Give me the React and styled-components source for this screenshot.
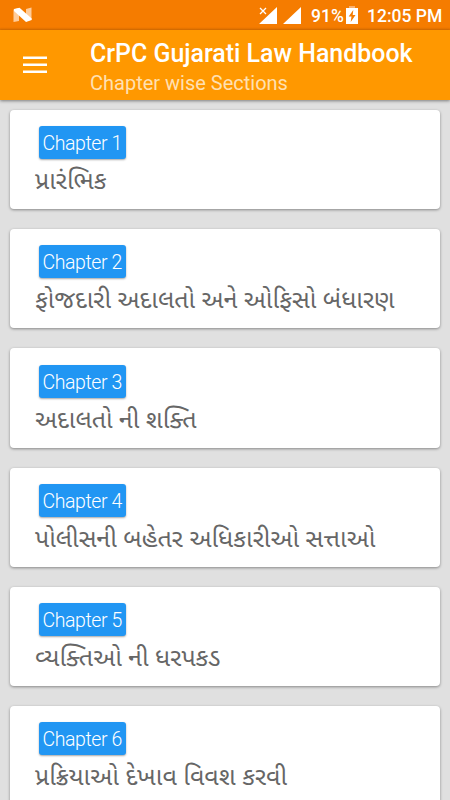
import React from "react";
import styled, { createGlobalStyle } from "styled-components";

const GlobalStyle = createGlobalStyle`
  *, *::before, *::after { box-sizing: border-box; }
  body {
    margin: 0;
    background: #e0e0e0;
    font-family: Roboto, "Noto Sans", sans-serif;
  }
`;

const Screen = styled.div`
  display: flex;
  flex-direction: column;
  height: 800px;
  overflow: hidden;
  background: #e0e0e0;
`;

const StatusBar = styled.div`
  display: flex;
  flex: none;
  align-items: center;
  height: 30px;
  padding: 0 8px 0 13px;
  background: linear-gradient(#f57c00 27px, #e27200 30px);
  color: #fff;
`;

const StatusIcons = styled.div`
  display: flex;
  align-items: center;
  margin-left: auto;
`;

const StatusText = styled.span`
  font-size: 17.5px;
  font-weight: 500;
  line-height: 30px;
  width: ${(p) => p.$width}px;
  margin-left: ${(p) => p.$gap}px;
  padding-top: 1px;
  white-space: nowrap;
`;

const AppBar = styled.header`
  display: flex;
  flex: none;
  height: 70px;
  padding-left: 23px;
  background: #ff9800;
  box-shadow: 0 1px 3px rgba(0, 0, 0, 0.45);
  z-index: 1;
`;

const MenuButton = styled.button`
  display: flex;
  align-items: center;
  width: 67px;
  padding: 0;
  border: 0;
  background: none;
`;

const Titles = styled.div`
  display: flex;
  flex-direction: column;
  padding-top: 8px;
  white-space: nowrap;
`;

const Title = styled.h1`
  margin: 0;
  color: #fff;
  font-size: 24.93px;
  font-weight: 500;
  line-height: 31px;
`;

const Subtitle = styled.div`
  color: #ffe0b2;
  font-size: 20px;
  line-height: 29px;
`;

const List = styled.main`
  display: flex;
  flex-direction: column;
  gap: 20px;
  padding: 10px 10px 0;
`;

const Card = styled.article`
  display: flex;
  flex: none;
  flex-direction: column;
  align-items: flex-start;
  height: 99.2px;
  padding: 16.2px 25px 0;
  border-radius: 4px;
  background: #fff;
  box-shadow: 0 1px 3px rgba(0, 0, 0, 0.4);
`;

const Badge = styled.span`
  width: 87px;
  height: 33px;
  margin-left: 4px;
  padding-left: 3.5px;
  border-radius: 3px;
  background: #2196f3;
  box-shadow: 0 1px 2px rgba(0, 0, 0, 0.35);
  color: #fff;
  font-size: 19.5px;
  font-weight: 300;
  letter-spacing: -0.42px;
  line-height: 36px;
  white-space: nowrap;
`;

const Name = styled.div`
  color: #666;
  font-family: "Noto Sans Gujarati", "Noto Sans", sans-serif;
  font-size: 25px;
  line-height: 48.4px;
  white-space: nowrap;
`;

const chapters = [
  "પ્રારંભિક",
  "ફોજદારી અદાલતો અને ઓફિસો બંધારણ",
  "અદાલતો ની શક્તિ",
  "પોલીસની બહેતર અધિકારીઓ સત્તાઓ",
  "વ્યક્તિઓ ની ધરપકડ",
  "પ્રક્રિયાઓ દેખાવ વિવશ કરવી",
];

const NougatIcon = () => (
  <svg width="20" height="16" viewBox="0 0 20 16">
    <path d="M0.5 2.5 6 1v13L0.5 15ZM13 2l5.5-1.5v12L13 14.5Z" fill="#ffcc99" />
    <path d="M1 2 6.5 0.8 18.7 11.5V13L13 15 1 4Z" fill="#fff" />
  </svg>
);

const SignalIcons = () => (
  <svg width="42" height="20" viewBox="0 0 42 20" fill="#fff">
    <path d="M18 2v17H0ZM42 2v17H24Z" />
    <path d="M0 0h9v10H0Z" fill="#f57c00" />
    <path d="m1 3 6 6M7 3 1 9" stroke="#fff" strokeWidth="1.3" />
  </svg>
);

const BatteryIcon = () => (
  <svg width="12" height="18" viewBox="0 0 12 18">
    <path d="M3 0h6v2H3Z" fill="#fab170" />
    <path d="M0 2h12v16H0Z" fill="#fff" />
    <path d="M7.3 4 2.7 10.6h2.8L4.7 16l4.8-7H6.7Z" fill="#f57c00" />
  </svg>
);

const MenuIcon = () => (
  <svg width="24" height="18" viewBox="0 0 24 18" fill="#fff">
    <path d="M0 0.5h24v2.6H0ZM0 7.5h24v2.6H0ZM0 14.5h24v2.6H0Z" />
  </svg>
);

export default function App() {
  return (
    <>
      <GlobalStyle />
      <Screen>
        <StatusBar>
          <NougatIcon />
          <StatusIcons>
            <SignalIcons />
            <StatusText $width={35} $gap={10}>91%</StatusText>
            <BatteryIcon />
            <StatusText $width={75} $gap={9}>12:05 PM</StatusText>
          </StatusIcons>
        </StatusBar>
        <AppBar>
          <MenuButton aria-label="Menu">
            <MenuIcon />
          </MenuButton>
          <Titles>
            <Title>CrPC Gujarati Law Handbook</Title>
            <Subtitle>Chapter wise Sections</Subtitle>
          </Titles>
        </AppBar>
        <List>
          {chapters.map((name, i) => (
            <Card key={name}>
              <Badge>Chapter {i + 1}</Badge>
              <Name>{name}</Name>
            </Card>
          ))}
        </List>
      </Screen>
    </>
  );
}
